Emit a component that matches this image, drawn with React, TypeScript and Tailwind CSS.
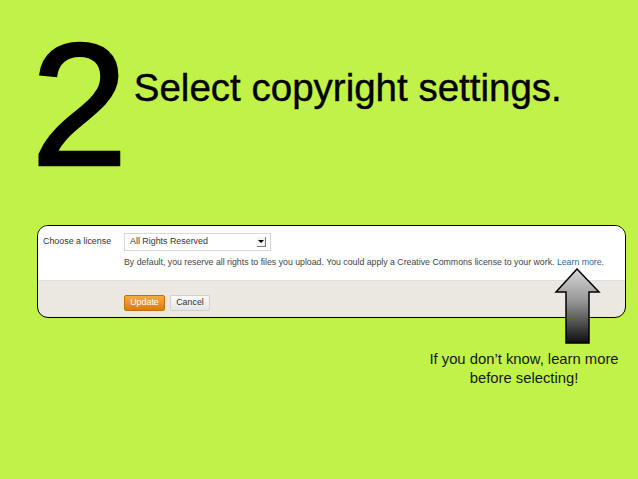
export default function App() {
  return (
    <div
      className="relative w-[638px] h-[479px] overflow-hidden bg-[#c1f247] text-black"
      style={{ fontFamily: '"Liberation Sans", Arial, sans-serif' }}
    >
      {/* heading */}
      <div className="flex items-start pl-[31px] pt-[18px]">
        <span className="text-[174px] leading-none [-webkit-text-stroke:2.5px_black]">2</span>
        <h1 className="mt-[51px] ml-[6px] text-[38.5px] leading-none font-normal [-webkit-text-stroke:0.4px_black]">
          Select copyright settings.
        </h1>
      </div>

      {/* license panel */}
      <div className="ml-[37px] mt-[33px] w-[589px] h-[93px] overflow-hidden rounded-[11px] border border-black bg-[#ebe8e2]">
        <div className="h-[55px] bg-white border-b border-[#e2e0db] pl-[5px] pt-[7px] text-[8.9px] text-[#333]">
          <div className="flex items-center">
            <span className="w-[81px]">Choose a license</span>
            <div className="flex items-center justify-between w-[147px] h-[18px] border border-[#d8d8d8] bg-white pl-[5px] pr-[4px] text-[#333]">
              <span>All Rights Reserved</span>
              <span className="relative w-[9px] h-[10px] border-r border-b border-[#777] bg-[#f4f4f4]">
                <span className="absolute left-[1px] top-[3px] w-0 h-0 border-l-[3px] border-r-[3px] border-t-[3px] border-l-transparent border-r-transparent border-t-black" />
              </span>
            </div>
          </div>
          <p className="ml-[81px] mt-[5px] text-[8.75px] text-[#444] whitespace-nowrap">
            By default, you reserve all rights to files you upload. You could apply a Creative Commons license to your work.{" "}
            <span className="text-[#2e6aa0]">Learn more.</span>
          </p>
        </div>
        <div className="flex gap-[5px] pl-[86px] pt-[14px] text-[8.9px]">
          <button className="w-[41px] h-[16px] rounded-[2px] border border-[#c96f08] bg-gradient-to-b from-[#f6ac3c] to-[#dc7a0c] text-white">
            Update
          </button>
          <button className="w-[40px] h-[16px] rounded-[2px] border border-[#d2d0cb] bg-gradient-to-b from-[#fafafa] to-[#e6e6e6] text-[#333]">
            Cancel
          </button>
        </div>
      </div>

      {/* arrow pointing at Learn more */}
      <svg
        className="absolute left-[554px] top-[268px]"
        width="48"
        height="77"
        viewBox="0 0 48 77"
      >
        <defs>
          <linearGradient id="ag" x1="0" y1="0" x2="0" y2="1">
            <stop offset="0" stopColor="#d8d8d8" />
            <stop offset="0.45" stopColor="#939393" />
            <stop offset="1" stopColor="#0d0d0d" />
          </linearGradient>
        </defs>
        <path
          d="M23 1 L45 24 L35 24 L35 75 L12 75 L12 24 L2 24 Z"
          fill="url(#ag)"
          stroke="#000"
          strokeWidth="1.5"
          strokeLinejoin="miter"
        />
      </svg>

      {/* annotation */}
      <p className="ml-[414px] mt-[32px] w-[220px] text-center text-[14.8px] leading-[19px] text-[#141a0c]">
        If you don’t know, learn more
        <br />
        before selecting!
      </p>
    </div>
  );
}
